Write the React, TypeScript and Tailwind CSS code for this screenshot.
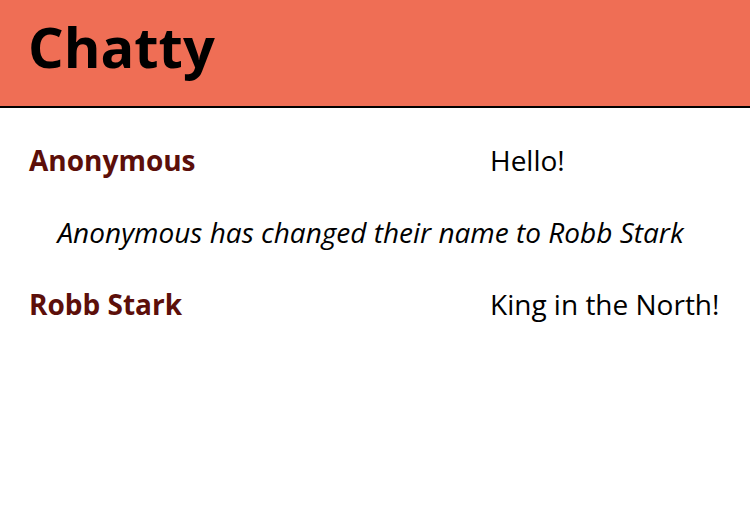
const messages = [
  { type: "message", user: "Anonymous", text: "Hello!" },
  { type: "notification", text: "Anonymous has changed their name to Robb Stark" },
  { type: "message", user: "Robb Stark", text: "King in the North!" },
];

export default function App() {
  return (
    <div className="w-[750px] h-[512px] bg-white font-['Open_Sans',sans-serif] text-black">
      <nav className="h-[108px] bg-[#ef6e55] border-b-2 border-black px-[28px] pt-[18px]">
        <h1 className="text-[56px] leading-none font-bold">Chatty</h1>
      </nav>
      <main className="px-[29px] pt-[16px]">
        {messages.map((m, i) =>
          m.type === "message" ? (
            <div key={i} className="flex py-[18px] text-[28px] leading-[36px]">
              <span className="w-[461px] font-bold text-[#5c0f0a]">{m.user}</span>
              <span>{m.text}</span>
            </div>
          ) : (
            <div key={i} className="py-[18px] pr-[9px] text-[28px] leading-[36px] italic text-center">
              {m.text}
            </div>
          )
        )}
      </main>
    </div>
  );
}
